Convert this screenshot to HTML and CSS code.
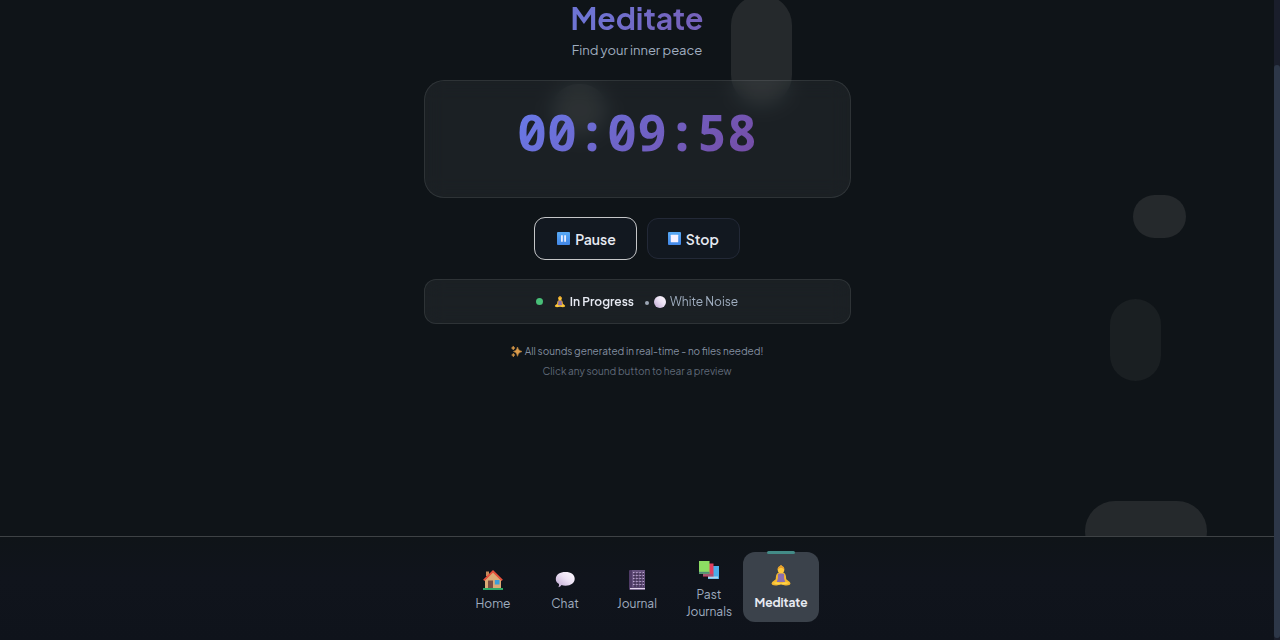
FILE: index.html
```html
<!DOCTYPE html>
<html lang="en">
<head>
<meta charset="utf-8">
<meta name="viewport" content="width=device-width, initial-scale=1">
<title>Meditate</title>
<link rel="stylesheet" href="styles.css">
</head>
<body>
<svg class="defs" aria-hidden="true">
  <defs>
    <linearGradient id="blue" x2="0" y2="1"><stop stop-color="#58a9f4"/><stop offset="1" stop-color="#4287e8"/></linearGradient>
    <linearGradient id="pearl" x1="1" x2="0" y2="1"><stop stop-color="#fffaff"/><stop offset=".45" stop-color="#ece2f4"/><stop offset="1" stop-color="#bda4cf"/></linearGradient>
    <symbol id="lotus" viewBox="0 0 20 20">
      <path d="M8 7C5.500 7.500 5.500 10 5.200 13L2 15.500Q.7 17 2 18Q4 19 7 18.500L10 17.500L13 18.500Q16 19 18 18Q19.300 17 18 15.500L14.800 13C14.500 10 14.500 7.500 12 7Z" fill="#f5b82e"/>
      <path d="M7.200 8.200Q10 7 12.800 8.200L12.800 12L13.800 15.500H6.200L7.200 12Z" fill="#8c6fae"/>
      <path d="M2.500 16.200Q6 14.800 10 16.800Q14 14.800 17.500 16.200Q15 17.800 10 17.600Q5 17.800 2.500 16.200Z" fill="#ffd54a"/>
      <ellipse cx="10" cy="4.300" rx="3" ry="3.300" fill="#ffc83a"/>
      <path d="M7 4Q7 1.300 10 1Q13 1.300 13 4Q11.500 2.600 10 2.600Q8.500 2.600 7 4Z" fill="#e39a2c"/>
      <circle cx="10" cy="1.100" r="1" fill="#e6a12d"/>
    </symbol>
  </defs>
</svg>

<div class="app">
  <div class="bubbles" aria-hidden="true">
    <span class="bubble tall"></span>
    <span class="bubble hidden"></span>
    <span class="bubble small"></span>
    <span class="bubble faint"></span>
    <span class="bubble wide"></span>
  </div>

  <main class="main">
    <h1 class="title">Meditate</h1>
    <p class="subtitle">Find your inner peace</p>

    <section class="card timer-card"><div class="timer" role="timer">00:09:58</div></section>

    <div class="controls">
      <button class="control primary" type="button">
        <svg class="control-icon" viewBox="0 0 14 14" aria-hidden="true"><rect width="14" height="14" rx="1" fill="url(#blue)"/><path d="M5.300 3.500V10.500M8.700 3.500V10.500" stroke="#f5f3ff" stroke-width="1.800"/></svg>
        Pause
      </button>
      <button class="control" type="button">
        <svg class="control-icon" viewBox="0 0 14 14" aria-hidden="true"><rect width="14" height="14" rx="1" fill="url(#blue)"/><rect x="3" y="3" width="8" height="8" rx=".6" fill="#f7f1ff"/></svg>
        Stop
      </button>
    </div>

    <section class="card status">
      <span class="live-dot"></span>
      <svg class="status-icon" aria-hidden="true"><use href="#lotus"/></svg>
      <strong class="progress">In Progress</strong>
      <span class="separator"></span>
      <svg class="status-icon" viewBox="0 0 12 12" aria-hidden="true"><circle cx="6" cy="6" r="6" fill="url(#pearl)"/></svg>
      <span class="sound">White Noise</span>
    </section>

    <p class="note">
      <svg class="sparkles" viewBox="0 0 11 11" aria-hidden="true"><path d="M6.500 1Q7 4.800 11 5.500Q7 6.200 6.500 10.300Q6 6.200 2.500 5.500Q6 4.800 6.500 1ZM2.200 0Q2.500 1.700 4 2Q2.500 2.300 2.200 4Q1.900 2.300.4 2Q1.900 1.700 2.200 0ZM2.300 7.300Q2.500 8.800 4 9Q2.500 9.200 2.300 11Q2.100 9.200.6 9Q2.100 8.800 2.300 7.300Z" fill="#dc9c4b" stroke="#dc9c4b" stroke-width=".5"/></svg>
      All sounds generated in real-time - no files needed!
    </p>
    <p class="hint">Click any sound button to hear a preview</p>
  </main>

  <nav class="nav" aria-label="Main">
    <a class="nav-item" href="#home">
      <svg class="nav-icon" viewBox="0 0 20 20" aria-hidden="true"><path d="M3 1.500H6V6H3Z" fill="#c58b5b"/><path d="M2 10L10 2L18 10V18.500H2Z" fill="#dcaa76"/><path d="M.8 10.400L10 1.400L19.200 10.400" fill="none" stroke="#e8523d" stroke-width="2"/><path d="M5 10.500H10V18.500H5Z" fill="#7b4c43"/><path d="M11.800 10H16.500V14.500H11.800Z" fill="#3b9dda"/><path d="M0 18H20V20H0Z" fill="#2fa866"/></svg>
      <span>Home</span>
    </a>
    <a class="nav-item" href="#chat">
      <svg class="nav-icon" viewBox="0 0 20 20" aria-hidden="true"><path d="M10.500 2C16 2 19.700 4.700 19.700 8.800S16 15.800 10.500 15.800Q8 15.800 6.500 15Q5.500 17 3.300 17.300Q4.300 16 4 14Q.8 12.200.8 8.900C.8 4.700 5 2 10.500 2Z" fill="url(#pearl)"/></svg>
      <span>Chat</span>
    </a>
    <a class="nav-item" href="#journal">
      <svg class="nav-icon" viewBox="0 0 20 20" aria-hidden="true"><path d="M2 1Q2 0 3 0H18V20H3Q2 20 2 19Z" fill="#4e3a66"/><path d="M5 0H18V17.500H5Z" fill="#65507d"/><path d="M3 18H18V19.300H3Z" fill="#e5d6ee"/><path d="M6 2.500H17M6 5.500H17M6 8.500H17M6 11.500H17M6 14.500H17" stroke="#bca9cf" stroke-width="1.200" stroke-dasharray="1.400 1.800"/><path d="M7 4H17M7 7H17M7 10H17M7 13H17M7 16H17" stroke="#30253e" stroke-width="1" stroke-dasharray="2 1"/></svg>
      <span>Journal</span>
    </a>
    <a class="nav-item" href="#past">
      <svg class="nav-icon" viewBox="0 0 20 20" aria-hidden="true"><path d="M9 5H20V18H9Z" fill="#49aee9"/><path d="M9 15.500H19V17.500H9Z" fill="#a9d9ef"/><path d="M4 2.500H14.500V15.500H4Z" fill="#e23e5d"/><path d="M4 13H14V15H4Z" fill="#a75471"/><path d="M0 0H10.500V12.800H0Z" fill="#8cdc63"/><path d="M0 10.800H10.500V12.800H0Z" fill="#508b78"/></svg>
      <span>Past Journals</span>
    </a>
    <a class="nav-item active" href="#meditate" aria-current="page">
      <svg class="nav-icon large" aria-hidden="true"><use href="#lotus"/></svg>
      <span>Meditate</span>
    </a>
  </nav>
</div>
<div class="scrollbar" aria-hidden="true"><div class="thumb"></div></div>
</body>
</html>
```
FILE: styles.css
```css
* { box-sizing: border-box; }

body {
  margin: 0;
  display: flex;
  height: 100vh;
  overflow: hidden;
  background: #0f1418;
  color: #e7eaf2;
  font-family: "Plus Jakarta Sans", Inter, sans-serif;
}

.defs { position: absolute; width: 0; height: 0; }

.app {
  position: relative;
  flex: 1;
  display: flex;
  flex-direction: column;
  overflow: hidden;
}

.bubbles { position: absolute; inset: 0; }
.bubble { position: absolute; background: #25292c; border-radius: 30px; }
.tall { left: 731px; top: -5px; width: 61px; height: 110px; }
.hidden { left: 552px; top: 84px; width: 55px; height: 52px; background: #212528; }
.small { left: 1133px; top: 195px; width: 53px; height: 43px; border-radius: 22px; }
.faint { left: 1110px; top: 299px; width: 51px; height: 82px; background: #1a1f22; }
.wide { left: 1085px; top: 501px; width: 122px; height: 61px; }

.main {
  position: relative;
  flex: 1;
  width: 427px;
  max-width: 100%;
  margin: 0 auto;
  text-align: center;
}

.title {
  width: fit-content;
  margin: 0 auto;
  font-size: 30px;
  line-height: 36px;
  font-weight: 700;
  background: linear-gradient(135deg, #6e74d4 20%, #7562bb 80%);
  background-clip: text;
  color: transparent;
}

.subtitle { margin: 4px 0 19px; font-size: 13px; line-height: 21px; color: #a0aec0; }

.card {
  background: rgba(240, 255, 255, 0.055);
  border: 1px solid rgba(255, 255, 255, 0.09);
  backdrop-filter: blur(10px);
}

.timer-card { padding: 20px 24px 34px; border-radius: 20px; }

.timer {
  width: fit-content;
  margin: 0 auto;
  font-family: "Noto Sans Mono", "DejaVu Sans Mono", monospace;
  font-size: 50px;
  line-height: 62px;
  font-weight: 700;
  background: linear-gradient(135deg, #687bea, #764ba2);
  background-clip: text;
  color: transparent;
}

.controls { display: flex; justify-content: center; align-items: center; gap: 10px; margin: 19px 0; }

.control {
  display: flex;
  align-items: center;
  gap: 5px;
  height: 41px;
  padding: 0 20px;
  border: 1px solid #232937;
  border-radius: 11px;
  background: #121820;
  color: #e7eaf2;
  font: 600 14px/20px "Plus Jakarta Sans", Inter, sans-serif;
}
.primary { height: 43px; padding: 0 20px 0 22px; border-color: #c5c6c8; }
.control-icon { width: 13px; height: 13px; }

.status {
  display: flex;
  align-items: center;
  justify-content: center;
  height: 45px;
  border-radius: 12px;
  font-size: 12px;
  line-height: 20px;
}
.live-dot { width: 7px; height: 7px; margin-right: 11px; border-radius: 50%; background: #48bf78; }
.status-icon { width: 12px; height: 12px; margin-right: 4px; }
.progress { font-weight: 600; }
.separator { width: 4px; height: 4px; margin: 2px 5px 0 11px; border-radius: 50%; background: #9ca7b5; }
.sound { color: #a0aec0; }

.note,
.hint { margin: 0; font-size: 10px; line-height: 20px; color: #8490a1; }
.note { display: flex; align-items: center; justify-content: center; gap: 3px; margin-top: 17px; }
.hint { color: #606a78; }
.sparkles { width: 11px; height: 11px; }

.nav {
  position: relative;
  display: flex;
  justify-content: center;
  align-items: center;
  height: 104px;
  padding-bottom: 4px;
  border-top: 1px solid #3e4245;
  background: linear-gradient(#0f1418, #10141c 40%, #0f131b);
}

.nav-item {
  position: relative;
  display: flex;
  flex-direction: column;
  align-items: center;
  justify-content: center;
  gap: 5px;
  width: 72px;
  height: 70px;
  padding-top: 8px;
  color: #a0aec0;
  font-size: 12px;
  line-height: 17px;
  text-align: center;
  text-decoration: none;
}
.nav-icon { width: 20px; height: 20px; }
.large { width: 22px; height: 22px; }

.active {
  gap: 7px;
  width: 76px;
  margin: 0 -2px;
  padding-top: 2px;
  border-radius: 12px;
  background: #3b424b;
  color: #e7eaf2;
  font-weight: 700;
}
.active::before {
  content: "";
  position: absolute;
  top: -1px;
  left: 50%;
  width: 28px;
  height: 3px;
  margin-left: -14px;
  border-radius: 2px;
  background: #438b87;
}

.scrollbar { width: 6px; padding: 65px 0 2px; background: #1a1e2b; }
.thumb { height: 100%; border-radius: 3px; background: #2d3748; }
```
